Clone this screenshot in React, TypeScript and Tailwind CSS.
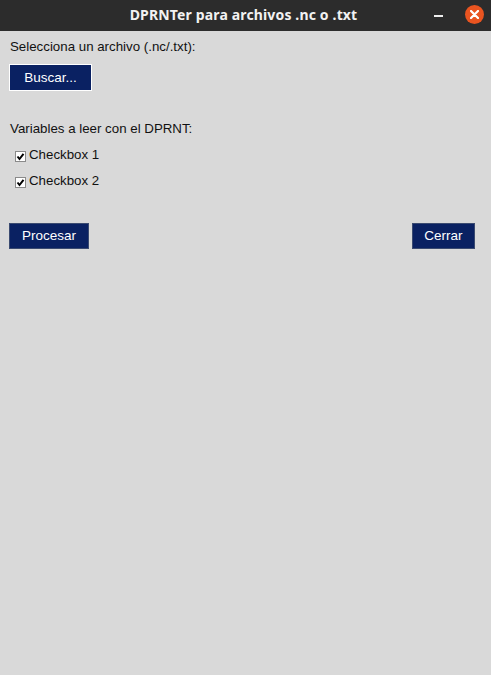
function CheckMark() {
  return (
    <svg width="11" height="11" viewBox="0 0 11 11" className="block">
      <rect x="0.5" y="0.5" width="10" height="10" fill="#ffffff" stroke="#8a8a8a" />
      <path d="M2.5 5.5 L4.5 8 L8.5 2.8" fill="none" stroke="#000000" strokeWidth="2" />
    </svg>
  );
}

function TkButton({ label, width, focused }: { label: string; width: string; focused?: boolean }) {
  return (
    <button
      className={
        focused
          ? `${width} h-[27px] border border-white bg-[#0a2162] text-[13.5px] text-white`
          : `${width} h-[26px] border border-[#3a4a70] bg-[#0a2162] text-[13.5px] text-white`
      }
    >
      {label}
    </button>
  );
}

export default function App() {
  const boxes = ["Checkbox 1", "Checkbox 2"];

  return (
    <div className="flex h-[675px] w-[491px] flex-col bg-[#d9d9d9] font-['Liberation_Sans',Arial,sans-serif]">
      <div className="relative flex h-[31px] shrink-0 items-center justify-center bg-[#2c2c2c]">
        <span className="-mt-[2px] mr-[4px] font-['Noto_Sans',sans-serif] text-[14px] font-bold tracking-[0.15px] text-[#f2f2f2]">
          DPRNTer para archivos .nc o .txt
        </span>
        <div className="absolute right-[7px] top-[5px] flex items-center gap-[22px]">
          <span className="mt-[2px] block h-[2px] w-[9px] bg-[#eeeeee]" />
          <span className="flex h-[19px] w-[19px] items-center justify-center rounded-full bg-[#e95420]">
            <svg width="9" height="9" viewBox="0 0 9 9">
              <path d="M1 1 L8 8 M8 1 L1 8" stroke="#ffffff" strokeWidth="2.2" strokeLinecap="round" />
            </svg>
          </span>
        </div>
      </div>

      <div className="flex flex-col px-[9px] pt-[8px] text-[13.3px] leading-[16px] text-[#111111]">
        <p className="pl-[1px]">Selecciona un archivo (.nc/.txt):</p>
        <div className="mt-[9px]">
          <TkButton label="Buscar..." width="w-[83px]" focused />
        </div>

        <p className="mt-[30px] pl-[1px]">Variables a leer con el DPRNT:</p>
        <div className="mt-[10px] flex flex-col gap-[10px] pl-[6px]">
          {boxes.map((b) => (
            <label key={b} className="flex h-[16px] items-center gap-[3px]">
              <span className="mt-[3px]">
                <CheckMark />
              </span>
              <span>{b}</span>
            </label>
          ))}
        </div>

        <div className="mt-[34px] flex items-center justify-between pr-[7px]">
          <TkButton label="Procesar" width="w-[80px]" />
          <TkButton label="Cerrar" width="w-[63px]" />
        </div>
      </div>
    </div>
  );
}
